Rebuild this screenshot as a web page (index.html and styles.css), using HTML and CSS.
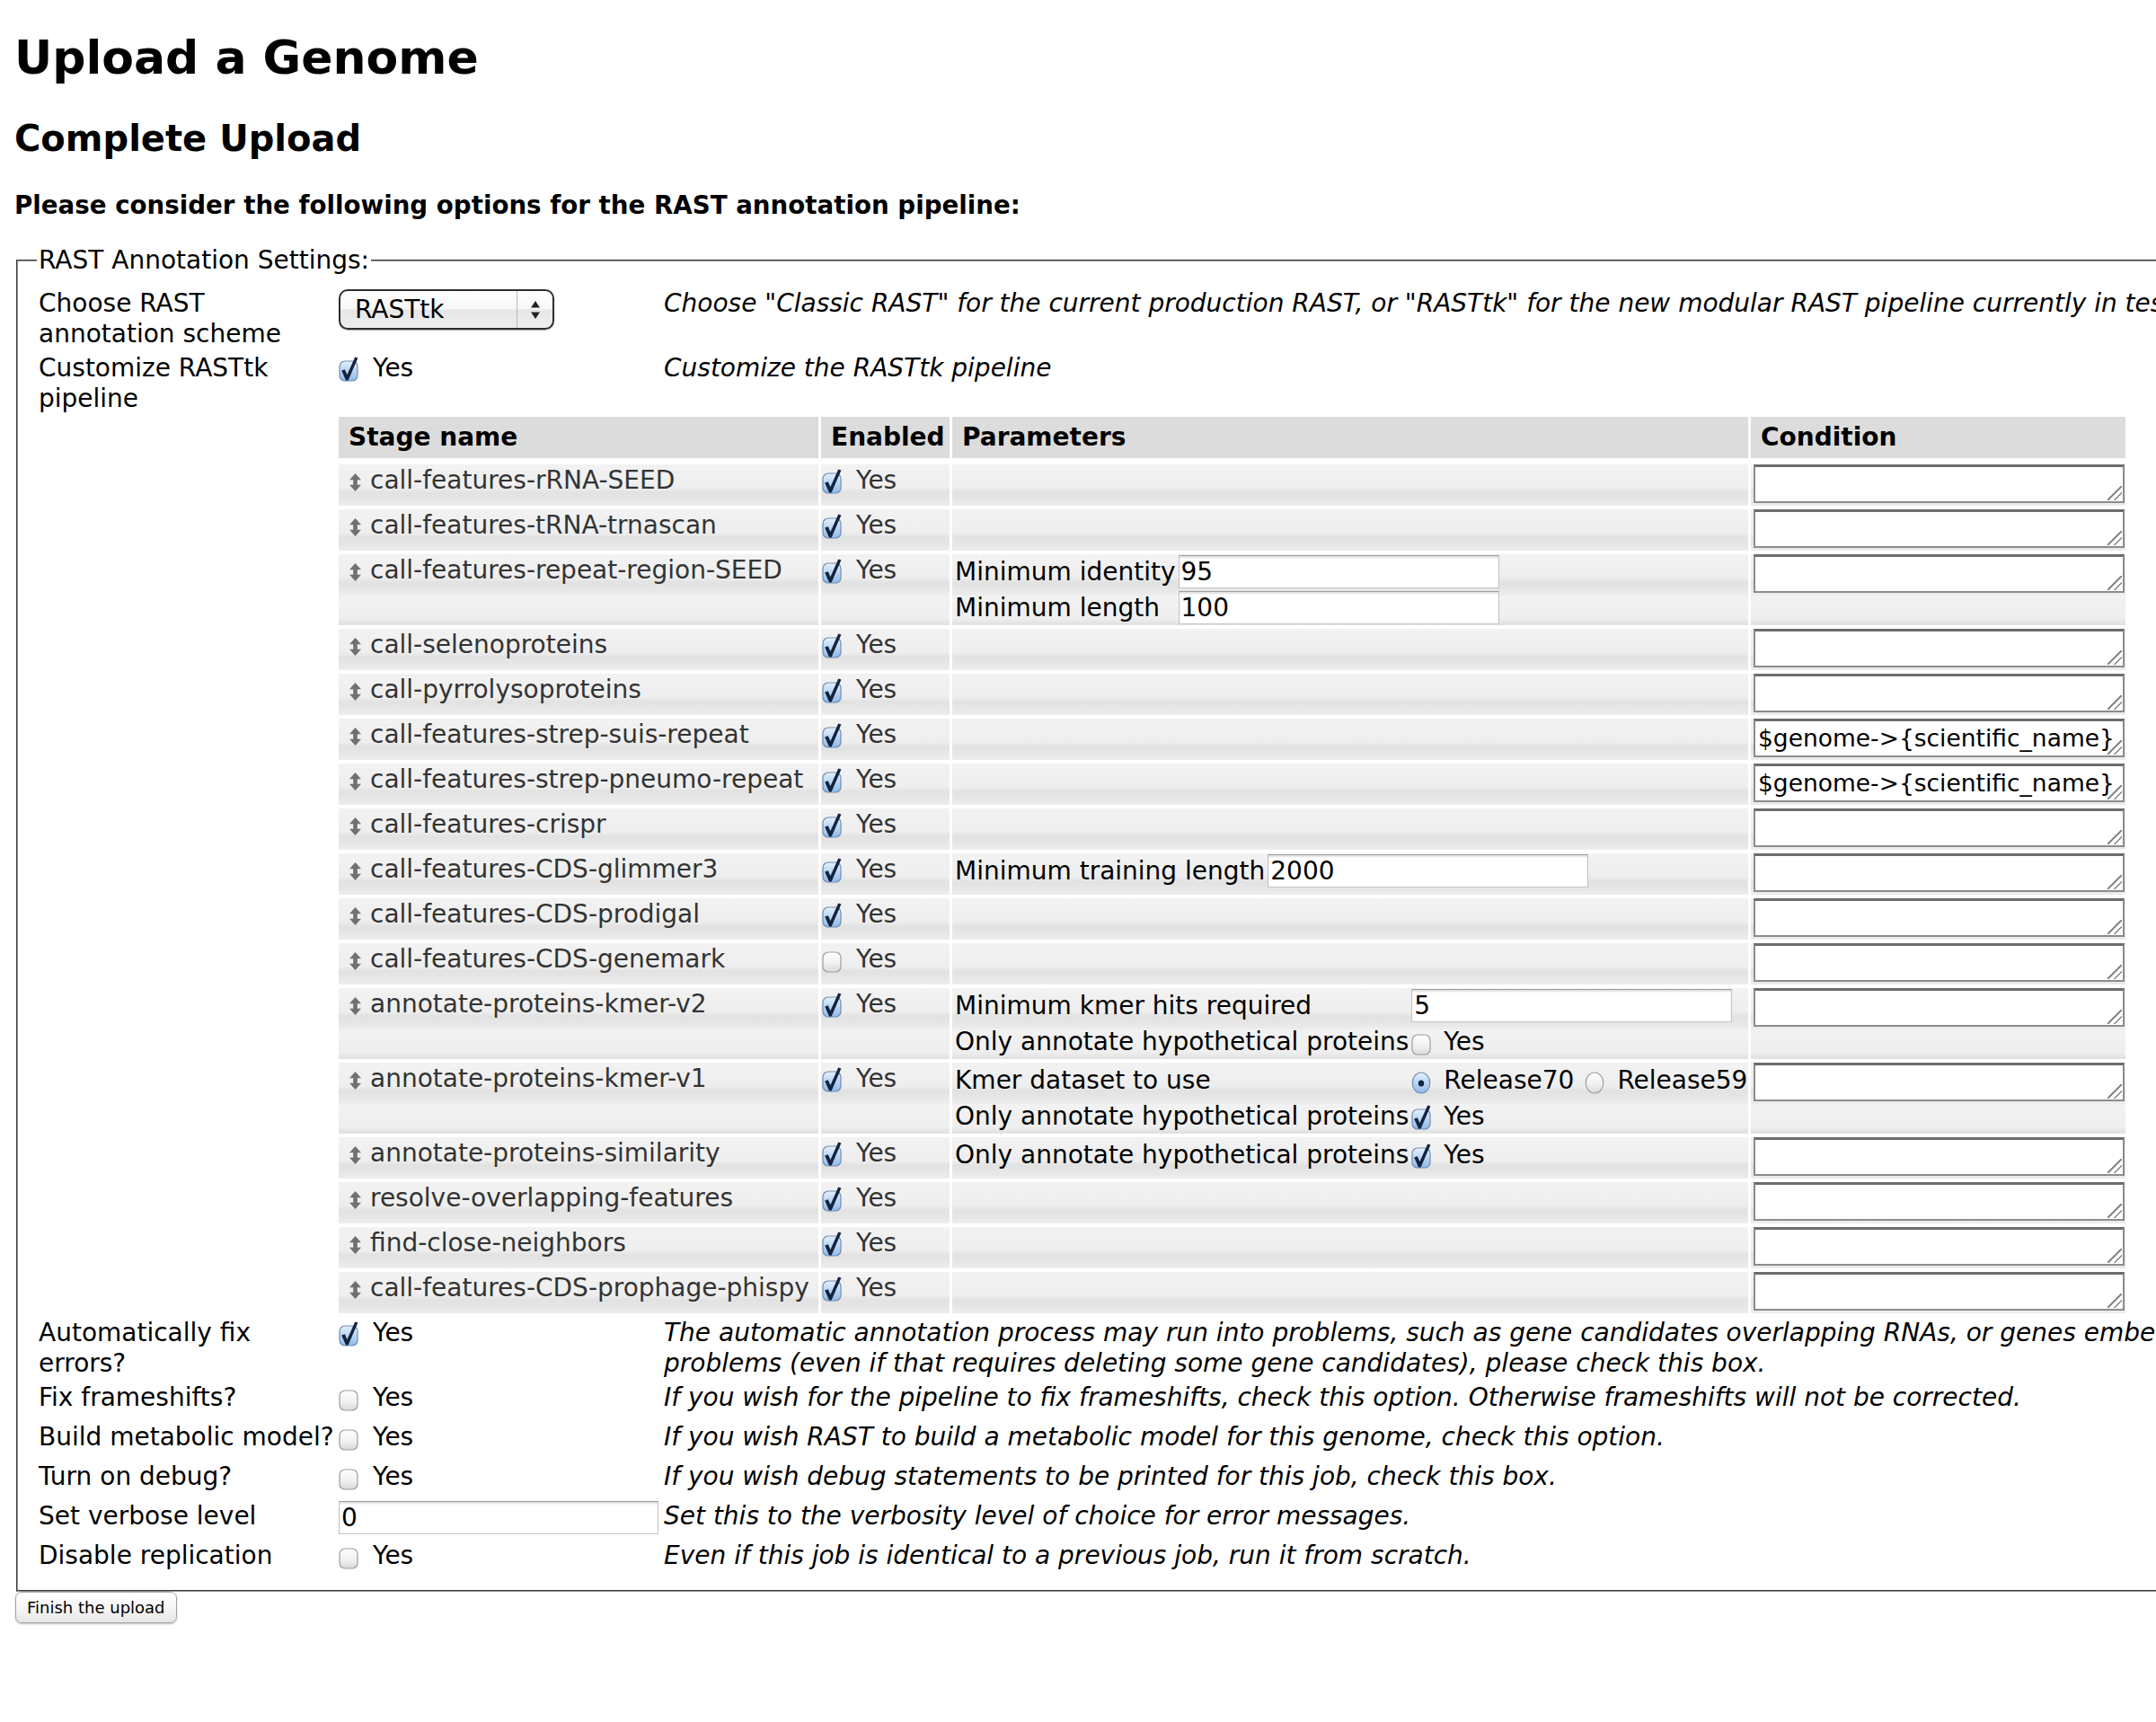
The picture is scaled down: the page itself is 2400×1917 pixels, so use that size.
FILE: index.html
```html
<!DOCTYPE html>
<html lang="en">
<head>
<meta charset="utf-8">
<title>Upload a Genome</title>
<link rel="stylesheet" href="styles.css">
</head>
<body>
<svg class="defs" aria-hidden="true">
  <defs>
    <linearGradient id="g-on" x1="0" y1="0" x2="0" y2="1">
      <stop offset="0" stop-color="#e4f0fc"/>
      <stop offset="0.5" stop-color="#b9d5f3"/>
      <stop offset="1" stop-color="#8fb9e8"/>
    </linearGradient>
    <linearGradient id="g-off" x1="0" y1="0" x2="0" y2="1">
      <stop offset="0" stop-color="#ffffff"/>
      <stop offset="0.55" stop-color="#f1f1f1"/>
      <stop offset="1" stop-color="#d9d9d9"/>
    </linearGradient>
    <symbol id="cb-on" viewBox="0 0 22 28">
      <rect x="1" y="5" width="20" height="22" rx="6" fill="url(#g-on)" stroke="#6f8db4" stroke-width="1.2"/>
      <path d="M3.2 15.6 L6.8 14.2 L9.4 20.2 L18.2 0.4 L21.4 1.6 L10.6 26.6 L8 26.6 Z" fill="#13233f"/>
    </symbol>
    <symbol id="cb-off" viewBox="0 0 22 28">
      <rect x="1" y="5" width="20" height="22" rx="6" fill="url(#g-off)" stroke="#9d9d9d" stroke-width="1.2"/>
    </symbol>
    <symbol id="rd-on" viewBox="0 0 22 28">
      <ellipse cx="11" cy="15.5" rx="9.8" ry="11.5" fill="url(#g-on)" stroke="#6f8db4" stroke-width="1.2"/>
      <ellipse cx="11" cy="16" rx="3.2" ry="3.6" fill="#13233f"/>
    </symbol>
    <symbol id="rd-off" viewBox="0 0 22 28">
      <ellipse cx="11" cy="15.5" rx="9.8" ry="11.5" fill="url(#g-off)" stroke="#9d9d9d" stroke-width="1.2"/>
    </symbol>
    <symbol id="drag" viewBox="0 0 13 20">
      <path d="M6.5 0 L13 7.2 L8.8 7.2 L8.8 12.8 L13 12.8 L6.5 20 L0 12.8 L4.2 12.8 L4.2 7.2 L0 7.2 Z" fill="#707070"/>
    </symbol>
  </defs>
</svg>

<div class="page">
<h1>Upload a Genome</h1>
<h2>Complete Upload</h2>
<p class="intro">Please consider the following options for the RAST annotation pipeline:</p>

<form class="upload-form">
<fieldset>
  <legend>RAST Annotation Settings:</legend>
  <div class="settings">
    <div class="lbl">Choose RAST annotation scheme</div>
    <div class="val">
      <div class="select"><span class="select-val">RASTtk</span><span class="select-arrows"><svg width="14" height="26" viewBox="0 0 14 26"><path d="M7 3 L12 10.5 L2 10.5 Z M2 15.5 L12 15.5 L7 23 Z" fill="#222"/></svg></span></div>
    </div>
    <div class="desc">Choose "Classic RAST" for the current production RAST, or "RASTtk" for the new modular RAST pipeline currently in test.</div>

    <div class="lbl">Customize RASTtk pipeline</div>
    <div class="val"><span class="chk"><svg class="box"><use href="#cb-on"/></svg><span>Yes</span></span></div>
    <div class="desc">Customize the RASTtk pipeline</div>

    <div class="lbl"></div>
    <div class="stage-wrap">
      <table class="stages">
        <colgroup><col class="c-name"><col class="c-en"><col class="c-par"><col class="c-cond"></colgroup>
        <thead>
          <tr><th>Stage name</th><th>Enabled</th><th>Parameters</th><th>Condition</th></tr>
        </thead>
        <tbody>
          <tr>
            <td class="name"><div class="name-in"><svg class="drag"><use href="#drag"/></svg>call-features-rRNA-SEED</div></td>
            <td class="en"><span class="chk"><svg class="box"><use href="#cb-on"/></svg><span>Yes</span></span></td>
            <td class="par"></td>
            <td class="cond"><textarea class="cond-ta"></textarea></td>
          </tr>
          <tr>
            <td class="name"><div class="name-in"><svg class="drag"><use href="#drag"/></svg>call-features-tRNA-trnascan</div></td>
            <td class="en"><span class="chk"><svg class="box"><use href="#cb-on"/></svg><span>Yes</span></span></td>
            <td class="par"></td>
            <td class="cond"><textarea class="cond-ta"></textarea></td>
          </tr>
          <tr>
            <td class="name"><div class="name-in"><svg class="drag"><use href="#drag"/></svg>call-features-repeat-region-SEED</div></td>
            <td class="en"><span class="chk"><svg class="box"><use href="#cb-on"/></svg><span>Yes</span></span></td>
            <td class="par">
              <div class="params">
                <span>Minimum identity</span><input class="txt" type="text" value="95">
                <span>Minimum length</span><input class="txt" type="text" value="100">
              </div>
            </td>
            <td class="cond"><textarea class="cond-ta"></textarea></td>
          </tr>
          <tr>
            <td class="name"><div class="name-in"><svg class="drag"><use href="#drag"/></svg>call-selenoproteins</div></td>
            <td class="en"><span class="chk"><svg class="box"><use href="#cb-on"/></svg><span>Yes</span></span></td>
            <td class="par"></td>
            <td class="cond"><textarea class="cond-ta"></textarea></td>
          </tr>
          <tr>
            <td class="name"><div class="name-in"><svg class="drag"><use href="#drag"/></svg>call-pyrrolysoproteins</div></td>
            <td class="en"><span class="chk"><svg class="box"><use href="#cb-on"/></svg><span>Yes</span></span></td>
            <td class="par"></td>
            <td class="cond"><textarea class="cond-ta"></textarea></td>
          </tr>
          <tr>
            <td class="name"><div class="name-in"><svg class="drag"><use href="#drag"/></svg>call-features-strep-suis-repeat</div></td>
            <td class="en"><span class="chk"><svg class="box"><use href="#cb-on"/></svg><span>Yes</span></span></td>
            <td class="par"></td>
            <td class="cond"><textarea class="cond-ta">$genome->{scientific_name} =~ /^Streptococcus\s/</textarea></td>
          </tr>
          <tr>
            <td class="name"><div class="name-in"><svg class="drag"><use href="#drag"/></svg>call-features-strep-pneumo-repeat</div></td>
            <td class="en"><span class="chk"><svg class="box"><use href="#cb-on"/></svg><span>Yes</span></span></td>
            <td class="par"></td>
            <td class="cond"><textarea class="cond-ta">$genome->{scientific_name} =~ /^Streptococcus\s+pneumoniae/</textarea></td>
          </tr>
          <tr>
            <td class="name"><div class="name-in"><svg class="drag"><use href="#drag"/></svg>call-features-crispr</div></td>
            <td class="en"><span class="chk"><svg class="box"><use href="#cb-on"/></svg><span>Yes</span></span></td>
            <td class="par"></td>
            <td class="cond"><textarea class="cond-ta"></textarea></td>
          </tr>
          <tr>
            <td class="name"><div class="name-in"><svg class="drag"><use href="#drag"/></svg>call-features-CDS-glimmer3</div></td>
            <td class="en"><span class="chk"><svg class="box"><use href="#cb-on"/></svg><span>Yes</span></span></td>
            <td class="par">
              <div class="params">
                <span>Minimum training length</span><input class="txt" type="text" value="2000">
              </div>
            </td>
            <td class="cond"><textarea class="cond-ta"></textarea></td>
          </tr>
          <tr>
            <td class="name"><div class="name-in"><svg class="drag"><use href="#drag"/></svg>call-features-CDS-prodigal</div></td>
            <td class="en"><span class="chk"><svg class="box"><use href="#cb-on"/></svg><span>Yes</span></span></td>
            <td class="par"></td>
            <td class="cond"><textarea class="cond-ta"></textarea></td>
          </tr>
          <tr>
            <td class="name"><div class="name-in"><svg class="drag"><use href="#drag"/></svg>call-features-CDS-genemark</div></td>
            <td class="en"><span class="chk"><svg class="box"><use href="#cb-off"/></svg><span>Yes</span></span></td>
            <td class="par"></td>
            <td class="cond"><textarea class="cond-ta"></textarea></td>
          </tr>
          <tr>
            <td class="name"><div class="name-in"><svg class="drag"><use href="#drag"/></svg>annotate-proteins-kmer-v2</div></td>
            <td class="en"><span class="chk"><svg class="box"><use href="#cb-on"/></svg><span>Yes</span></span></td>
            <td class="par">
              <div class="params">
                <span>Minimum kmer hits required</span><input class="txt" type="text" value="5">
                <span>Only annotate hypothetical proteins</span><span class="chk pchk"><svg class="box"><use href="#cb-off"/></svg><span>Yes</span></span>
              </div>
            </td>
            <td class="cond"><textarea class="cond-ta"></textarea></td>
          </tr>
          <tr>
            <td class="name"><div class="name-in"><svg class="drag"><use href="#drag"/></svg>annotate-proteins-kmer-v1</div></td>
            <td class="en"><span class="chk"><svg class="box"><use href="#cb-on"/></svg><span>Yes</span></span></td>
            <td class="par">
              <div class="params">
                <span>Kmer dataset to use</span><span class="chk pchk radios"><svg class="box"><use href="#rd-on"/></svg><span>Release70</span><svg class="box second"><use href="#rd-off"/></svg><span>Release59</span></span>
                <span>Only annotate hypothetical proteins</span><span class="chk pchk"><svg class="box"><use href="#cb-on"/></svg><span>Yes</span></span>
              </div>
            </td>
            <td class="cond"><textarea class="cond-ta"></textarea></td>
          </tr>
          <tr>
            <td class="name"><div class="name-in"><svg class="drag"><use href="#drag"/></svg>annotate-proteins-similarity</div></td>
            <td class="en"><span class="chk"><svg class="box"><use href="#cb-on"/></svg><span>Yes</span></span></td>
            <td class="par">
              <div class="params">
                <span>Only annotate hypothetical proteins</span><span class="chk pchk"><svg class="box"><use href="#cb-on"/></svg><span>Yes</span></span>
              </div>
            </td>
            <td class="cond"><textarea class="cond-ta"></textarea></td>
          </tr>
          <tr>
            <td class="name"><div class="name-in"><svg class="drag"><use href="#drag"/></svg>resolve-overlapping-features</div></td>
            <td class="en"><span class="chk"><svg class="box"><use href="#cb-on"/></svg><span>Yes</span></span></td>
            <td class="par"></td>
            <td class="cond"><textarea class="cond-ta"></textarea></td>
          </tr>
          <tr>
            <td class="name"><div class="name-in"><svg class="drag"><use href="#drag"/></svg>find-close-neighbors</div></td>
            <td class="en"><span class="chk"><svg class="box"><use href="#cb-on"/></svg><span>Yes</span></span></td>
            <td class="par"></td>
            <td class="cond"><textarea class="cond-ta"></textarea></td>
          </tr>
          <tr>
            <td class="name"><div class="name-in"><svg class="drag"><use href="#drag"/></svg>call-features-CDS-prophage-phispy</div></td>
            <td class="en"><span class="chk"><svg class="box"><use href="#cb-on"/></svg><span>Yes</span></span></td>
            <td class="par"></td>
            <td class="cond"><textarea class="cond-ta"></textarea></td>
          </tr>
        </tbody>
      </table>
    </div>

    <div class="lbl">Automatically fix errors?</div>
    <div class="val"><span class="chk"><svg class="box"><use href="#cb-on"/></svg><span>Yes</span></span></div>
    <div class="desc">The automatic annotation process may run into problems, such as gene candidates overlapping RNAs, or genes embedded inside other genes. To automatically resolve these<br>problems (even if that requires deleting some gene candidates), please check this box.</div>

    <div class="lbl">Fix frameshifts?</div>
    <div class="val"><span class="chk"><svg class="box"><use href="#cb-off"/></svg><span>Yes</span></span></div>
    <div class="desc">If you wish for the pipeline to fix frameshifts, check this option. Otherwise frameshifts will not be corrected.</div>

    <div class="lbl">Build metabolic model?</div>
    <div class="val"><span class="chk"><svg class="box"><use href="#cb-off"/></svg><span>Yes</span></span></div>
    <div class="desc">If you wish RAST to build a metabolic model for this genome, check this option.</div>

    <div class="lbl">Turn on debug?</div>
    <div class="val"><span class="chk"><svg class="box"><use href="#cb-off"/></svg><span>Yes</span></span></div>
    <div class="desc">If you wish debug statements to be printed for this job, check this box.</div>

    <div class="lbl">Set verbose level</div>
    <div class="val"><input class="txt verbose" type="text" value="0"></div>
    <div class="desc">Set this to the verbosity level of choice for error messages.</div>

    <div class="lbl">Disable replication</div>
    <div class="val"><span class="chk"><svg class="box"><use href="#cb-off"/></svg><span>Yes</span></span></div>
    <div class="desc">Even if this job is identical to a previous job, run it from scratch.</div>
  </div>
</fieldset>
<button class="btn" type="button">Finish the upload</button>
</form>
</div>
</body>
</html>
```

FILE: styles.css
```css
* {
  box-sizing: border-box;
}

body {
  margin: 16px 0 0 16px;
  font-family: "DejaVu Sans", Verdana, sans-serif;
  font-size: 28px;
  line-height: 34px;
  color: #000;
  background: #fff;
}

.page {
  overflow: hidden;
  padding-bottom: 8px;
}

.defs {
  position: absolute;
  width: 0;
  height: 0;
  overflow: hidden;
}

h1 {
  font-size: 52px;
  line-height: 60px;
  font-weight: bold;
  margin: 18px 0 0;
}

h2 {
  font-size: 40px;
  line-height: 46px;
  font-weight: bold;
  margin: 37px 0 0;
}

.intro {
  font-weight: bold;
  font-size: 27.7px;
  margin: 35px 0 0;
}

.upload-form {
  margin: 27px 0 0;
}

fieldset {
  width: 2900px;
  margin: 0 2px;
  padding: 10px 21px 11px;
  border: 2px groove #8e8e8e;
}

legend {
  padding: 0 2px;
  line-height: 34px;
}

.settings {
  display: grid;
  grid-template-columns: 332px 360px max-content;
  column-gap: 2px;
  row-gap: 4px;
  padding: 4px 2px;
}

.lbl {
  line-height: 34px;
}

.val {
  min-height: 40px;
}

.desc {
  font-style: italic;
  white-space: nowrap;
}

.stage-wrap {
  grid-column: 2 / 4;
}

/* select */
.select {
  display: flex;
  align-items: center;
  width: 240px;
  height: 45px;
  margin-top: 1px;
  border: 2px solid #2e2e2e;
  border-radius: 10px;
  background: linear-gradient(#ffffff 0%, #f7f7f7 48%, #e6e6e6 52%, #eeeeee 100%);
  box-shadow: 0 1px 1px rgba(0, 0, 0, 0.3);
}

.select-val {
  flex: 1;
  padding-left: 16px;
}

.select-arrows {
  width: 40px;
  height: 100%;
  border-left: 1px solid #b8b8b8;
  display: flex;
  align-items: center;
  justify-content: center;
}

/* checkboxes */
.chk {
  display: flex;
  align-items: flex-start;
  gap: 16px;
  white-space: nowrap;
  line-height: 34px;
}

.chk .box {
  width: 22px;
  height: 28px;
  margin-top: 4px;
  flex: none;
}

.radios .second {
  margin-left: -2px;
}

/* stages table */
.stages {
  border-collapse: separate;
  border-spacing: 3px 4px;
  table-layout: fixed;
  width: 1995px;
  margin: -5px 0 -3px -3px;
}

.c-name { width: 534px; }
.c-en { width: 143px; }
.c-par { width: 886px; }
.c-cond { width: 417px; }

.stages th {
  background: #dcdcdc;
  height: 49px;
  padding: 0 0 0 11px;
  border-bottom: 3px solid #fff;
  text-align: left;
  vertical-align: middle;
  font-weight: bold;
  white-space: nowrap;
}

.stages td {
  vertical-align: top;
  padding: 1px 3px;
  background: linear-gradient(#f2f2f2 0%, #eeeeee 56%, #e2e2e2 68%, #e5e5e5 80%, #ededed 100%);
  background-size: 100% 46px;
  background-repeat: repeat-y;
}

.stages td.name {
  padding-left: 12px;
  color: #333;
  white-space: nowrap;
}

.name-in {
  display: flex;
  align-items: center;
  gap: 10px;
  height: 34px;
}

.drag {
  width: 13px;
  height: 20px;
  flex: none;
  margin-top: 4px;
}

.stages td.en {
  padding-left: 1px;
  color: #333;
}

.stages td.par {
  padding: 1px 3px;
}

.stages td.cond {
  padding: 0 0 0 3px;
}

.params {
  display: grid;
  grid-template-columns: max-content max-content;
  grid-auto-rows: 37px;
  column-gap: 3px;
  row-gap: 3px;
  align-items: center;
  white-space: nowrap;
}

.pchk {
  gap: 14px;
}

.txt {
  width: 357px;
  height: 37px;
  padding: 0 2px;
  border: 1px solid #c4c4c4;
  border-top-color: #9c9c9c;
  box-shadow: inset 0 2px 2px rgba(0, 0, 0, 0.12);
  background: #fff;
  font-family: "DejaVu Sans", Verdana, sans-serif;
  font-size: 28px;
  color: #000;
}

.verbose {
  width: 356px;
}

.cond-ta {
  display: block;
  width: 413px;
  height: 43px;
  margin: 0 0 3px;
  padding: 2px 3px;
  border: 2px solid #8c8c8c;
  border-top: 3px solid #6c6c6c;
  background:
    linear-gradient(135deg, transparent 0 46%, #8a8a8a 46% 54%, transparent 54% 70%, #8a8a8a 70% 78%, transparent 78%) no-repeat right 1px bottom 1px / 16px 16px,
    #fff;
  font-family: "DejaVu Sans", Verdana, sans-serif;
  font-size: 26.5px;
  line-height: 34px;
  color: #000;
  overflow: hidden;
  resize: none;
}

.btn {
  display: block;
  height: 35px;
  margin: 0 0 0 1px;
  padding: 0 12px;
  border: 1px solid #a5a5a5;
  border-radius: 7px;
  background: linear-gradient(#ffffff 0%, #f6f6f6 50%, #e6e6e6 100%);
  box-shadow: 0 1px 2px rgba(0, 0, 0, 0.25);
  font-family: "DejaVu Sans", Verdana, sans-serif;
  font-size: 18px;
  color: #000;
}
```
